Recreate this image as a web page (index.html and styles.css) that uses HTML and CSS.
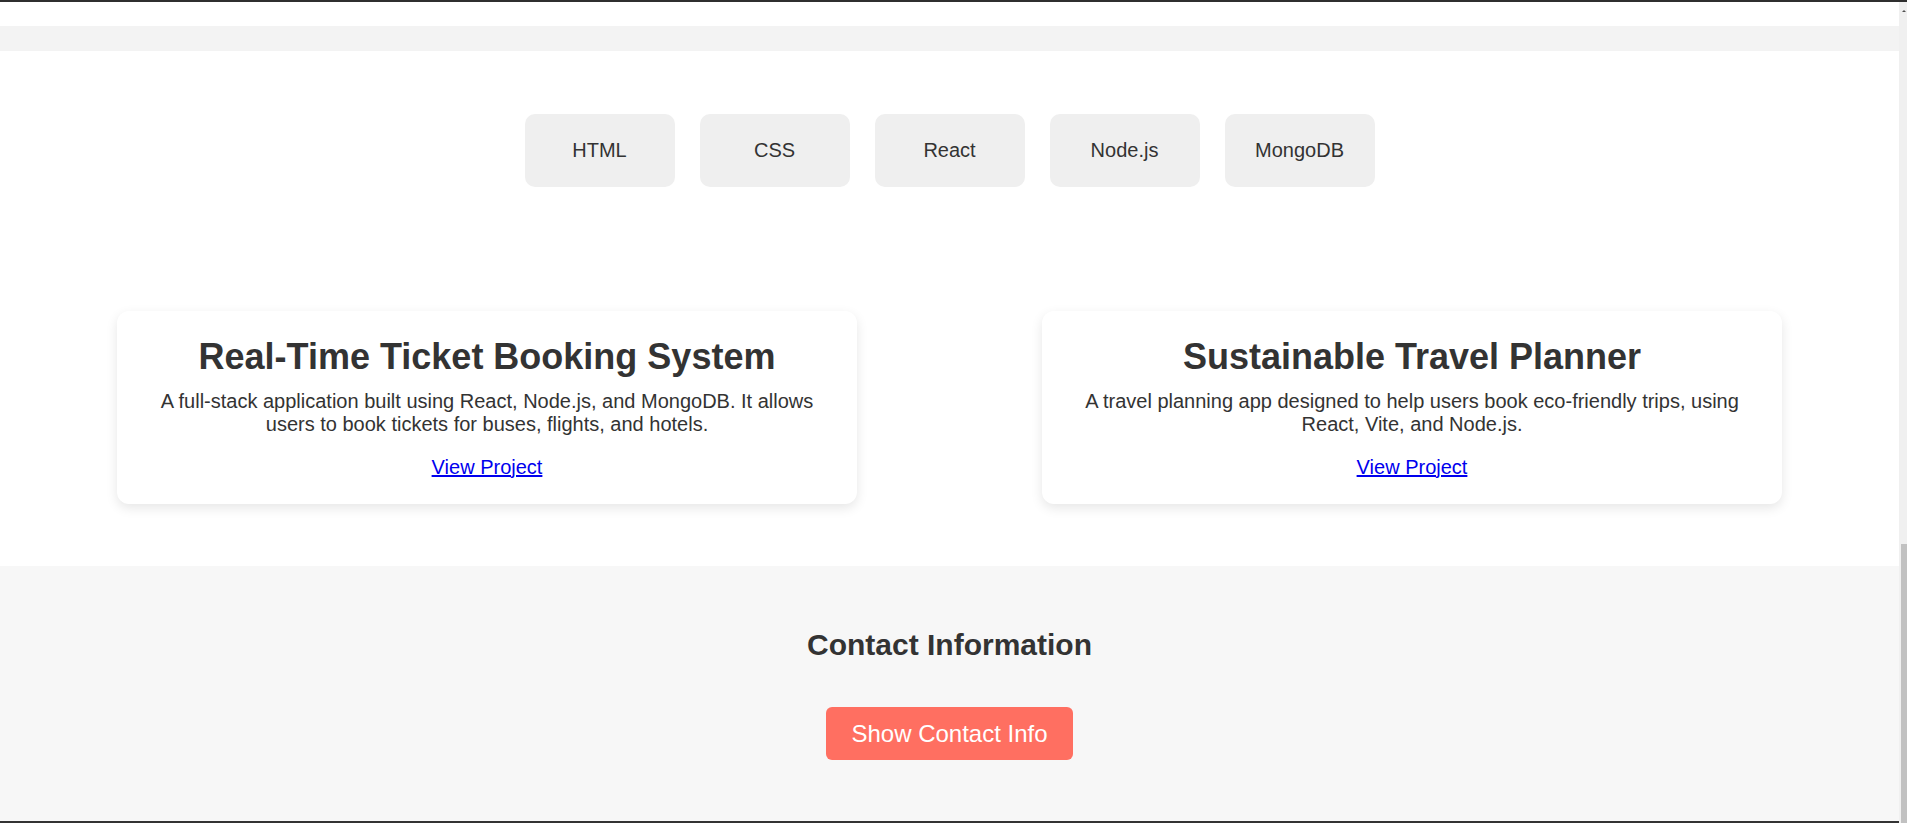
FILE: index.html
```html
<!DOCTYPE html>
<html lang="en">
<head>
<meta charset="utf-8">
<title>Portfolio</title>
<link rel="stylesheet" href="styles.css">
</head>
<body>
<div class="topline"></div>
<div class="frame">
  <main class="page">
    <div class="header-tail"></div>
    <div class="band"></div>
    <section class="projects">
      <ul class="skills">
        <li class="skill">HTML</li>
        <li class="skill">CSS</li>
        <li class="skill">React</li>
        <li class="skill">Node.js</li>
        <li class="skill">MongoDB</li>
      </ul>
      <div class="cards">
        <article class="card">
          <h3 class="card-title">Real-Time Ticket Booking System</h3>
          <p class="card-desc">A full-stack application built using React, Node.js, and MongoDB. It allows users to book tickets for buses, flights, and hotels.</p>
          <a class="card-link" href="#">View Project</a>
        </article>
        <article class="card">
          <h3 class="card-title">Sustainable Travel Planner</h3>
          <p class="card-desc">A travel planning app designed to help users book eco-friendly trips, using React, Vite, and Node.js.</p>
          <a class="card-link" href="#">View Project</a>
        </article>
      </div>
    </section>
    <section class="contact">
      <h2 class="contact-title">Contact Information</h2>
      <button class="contact-btn" type="button">Show Contact Info</button>
    </section>
    <footer class="footer"></footer>
  </main>
  <div class="scrollbar">
    <span class="scroll-arrow"></span>
    <div class="scroll-thumb"></div>
  </div>
</div>
</body>
</html>
```

FILE: styles.css
```css
* { box-sizing: border-box; }

html, body {
  margin: 0;
  padding: 0;
  height: 823px;
  overflow: hidden;
  background: #ffffff;
  font-family: "Liberation Sans", Arial, sans-serif;
  color: #333333;
}

.topline {
  height: 2px;
  background: #2f2f2f;
}

.frame {
  display: flex;
  height: 821px;
}

.page {
  flex: 1;
  display: flex;
  flex-direction: column;
  min-width: 0;
}

.header-tail {
  height: 24px;
  background: #ffffff;
}

.band {
  height: 25px;
  background: #f3f3f3;
}

.projects {
  background: #ffffff;
  padding: 63px 0 62.5px;
  display: flex;
  flex-direction: column;
  align-items: center;
}

.skills {
  list-style: none;
  margin: 0;
  padding: 0;
  display: flex;
  gap: 25px;
  justify-content: center;
}

.skill {
  width: 150px;
  padding: 25px 0;
  line-height: 23px;
  font-size: 20px;
  text-align: center;
  background: #efefef;
  border-radius: 10px;
  color: #333333;
}

.cards {
  margin-top: 124px;
  display: flex;
  gap: 185px;
  justify-content: center;
}

.card {
  width: 740px;
  padding: 25px;
  background: #ffffff;
  border-radius: 12px;
  box-shadow: 0 4px 12px rgba(0, 0, 0, 0.1);
  text-align: center;
  display: flex;
  flex-direction: column;
  align-items: center;
}

.card-title {
  margin: 0 0 12.5px;
  font-size: 36px;
  line-height: 41px;
  font-weight: bold;
  color: #333333;
}

.card-desc {
  margin: 0 0 20px;
  font-size: 20px;
  line-height: 23px;
  color: #333333;
}

.card-link {
  font-size: 20px;
  line-height: 23px;
  color: #0000ee;
  text-decoration: underline;
}

.contact {
  background: #f7f7f7;
  padding: 62px 0 62px;
  display: flex;
  flex-direction: column;
  align-items: center;
  height: 255px;
}

.contact-title {
  margin: 0 0 44.5px;
  font-size: 30px;
  line-height: 34.5px;
  font-weight: bold;
  color: #333333;
}

.contact-btn {
  font-family: "Liberation Sans", Arial, sans-serif;
  font-size: 24px;
  line-height: 27.5px;
  padding: 12.5px 25px;
  border: none;
  border-radius: 6px;
  background: #ff6f61;
  color: #ffffff;
  cursor: pointer;
}

.footer {
  height: 2px;
  background: #333333;
}

.scrollbar {
  width: 8px;
  background: #f0f0f0;
  position: relative;
  display: flex;
  flex-direction: column;
  justify-content: flex-end;
  align-items: flex-end;
}

.scroll-arrow {
  position: absolute;
  top: 8px;
  right: 1px;
  width: 0;
  height: 0;
  border-left: 2px solid transparent;
  border-right: 2px solid transparent;
  border-bottom: 2px solid #505050;
}

.scroll-thumb {
  width: 6px;
  height: 279px;
  background: #c1c1c1;
}
```
